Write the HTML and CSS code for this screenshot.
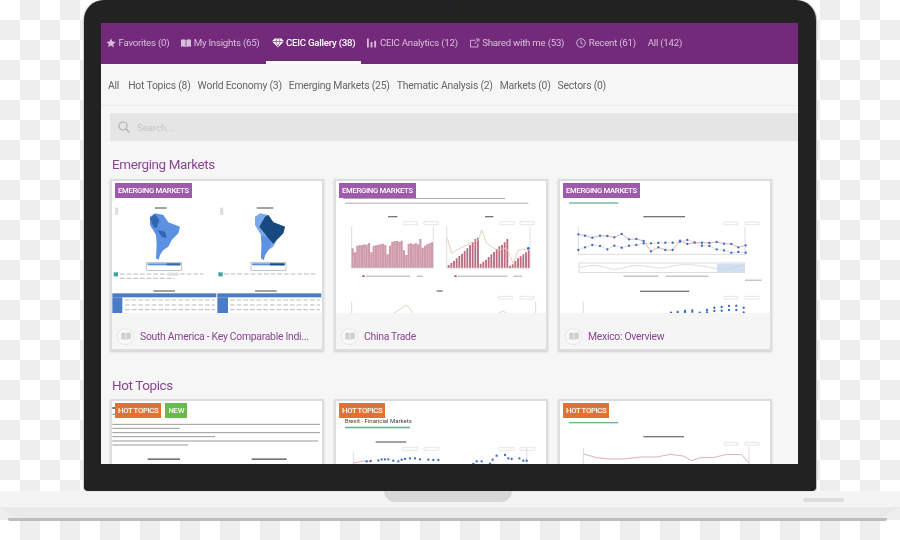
FILE: index.html
```html
<!DOCTYPE html>
<html lang="en">
<head>
<meta charset="utf-8">
<title>CEIC Gallery</title>
<link rel="stylesheet" href="styles.css">
</head>
<body>
<svg class="defs" width="0" height="0" aria-hidden="true">
  <symbol id="book" viewBox="0 0 12 10"><path d="M0 1.2C2 .2 4.4.4 5.6 1.4V10C4.4 9 2 8.8 0 9.6ZM12 1.2C10 .2 7.6.4 6.4 1.4V10C7.6 9 10 8.8 12 9.6Z"/></symbol>
</svg>
<main class="laptop">
  <section class="lid">
    <span class="camera"></span>
    <div class="screen">
      <nav class="tabs">
        <a class="tab"><svg class="ico" viewBox="0 0 12 12"><path d="M6 .6l1.7 3.6 3.9.5-2.9 2.7.8 3.9L6 8.9l-3.5 1.9.8-3.9L.4 4.7l3.9-.5z"/></svg>Favorites (0)</a>
        <a class="tab"><svg class="ico" viewBox="0 0 12 10"><use href="#book"/></svg>My Insights (65)</a>
        <a class="tab active"><svg class="ico gem" viewBox="0 0 13 10"><path d="M3 0h7l3 3.2-6.5 6.8L0 3.2z"/><path class="cut" d="M0 3.4h13M4.200 3.400L6.500 9l2.300-5.600M4.200 3.400L5.500.2M8.800 3.400L7.500.2"/></svg>CEIC Gallery (38)</a>
        <a class="tab"><svg class="ico" viewBox="0 0 11 10"><path d="M0 0h2v10H0zM4 4h2v6H4zM8 2.500h2V10H8z"/></svg>CEIC Analytics (12)</a>
        <a class="tab"><svg class="ico line" viewBox="0 0 11 10"><path d="M6 2H.6v7.400h8V5.500M5 6l4.500-5M6.500.6h3.300v3"/></svg>Shared with me (53)</a>
        <a class="tab"><svg class="ico line" viewBox="0 0 11 11"><circle cx="5.500" cy="5.500" r="4.700"/><path d="M5.500 2.500v3.300l2.200 1.200"/></svg>Recent (61)</a>
        <a class="tab">All (142)</a>
      </nav>
      <nav class="filters">
        <a>All</a><a class="spaced">Hot Topics (8)</a><a>World Economy (3)</a><a>Emerging Markets (25)</a><a>Thematic Analysis (2)</a><a>Markets (0)</a><a>Sectors (0)</a>
      </nav>
      <div class="search">
        <svg class="search-ico" viewBox="0 0 12 12"><circle cx="5" cy="5" r="4"/><path d="M8 8l3.500 3.500"/></svg>
        <span>Search...</span>
      </div>

      <h2 class="heading">Emerging Markets</h2>
      <div class="cards">
        <article class="card">
          <span class="badges"><b class="badge purple">EMERGING MARKETS</b></span>
          <svg class="thumb" viewBox="36 18 630 396">
            <rect class="soft" x="45" y="98" width="10" height="22"/><rect class="soft" x="360" y="98" width="10" height="22"/>
            <rect class="ink" x="165" y="97" width="35" height="4"/><rect class="ink" x="470" y="97" width="50" height="4"/>
            <path class="blue" d="M150 125L165 115L190 120L205 142L240 155L235 175L215 195L205 215L190 225L180 240L176 255L168 250L170 210L168 180L150 150Z"/>
            <path class="navy" d="M150 130L165 118L178 135L170 160L160 155ZM172 165L195 170L200 190L185 185Z"/>
            <path class="pale" d="M465 125L480 115L505 120L520 142L555 155L550 175L530 195L520 215L505 225L495 240L491 255L483 250L485 210L483 180L465 150Z"/>
            <path class="navy2" d="M495 125L505 120L520 142L555 155L550 175L530 195L520 207L505 190L490 170L478 155Z"/>
            <path class="blue" d="M483 180L505 190L515 208L505 225L495 240L491 255L483 250L485 210Z"/>
            <rect class="frame" x="140" y="262" width="105" height="24"/><rect class="frame" x="453" y="262" width="105" height="24"/>
            <rect class="blue" x="143" y="265" width="98" height="6"/><rect class="navy" x="200" y="265" width="41" height="6"/>
            <rect class="blue" x="456" y="265" width="98" height="6"/><rect class="navy2" x="510" y="265" width="44" height="6"/>
            <rect class="teal" x="41" y="292" width="13" height="12"/><rect class="teal" x="355" y="292" width="13" height="12"/>
            <path class="dash" d="M60 297H310M60 310H225M372 297H650"/>
            <rect class="soft" x="204" y="293" width="32" height="9"/>
            <rect class="ink" x="160" y="346" width="65" height="4"/><rect class="ink" x="465" y="346" width="65" height="4"/>
            <rect class="tbl" x="37" y="355" width="312" height="12"/><rect class="tbl" x="352" y="355" width="312" height="12"/>
            <rect class="tbl" x="37" y="367" width="30" height="48"/><rect class="tbl" x="352" y="367" width="32" height="48"/>
            <path class="dash" d="M75 375H345M75 390H345M75 404H345M390 375H660M390 390H660M390 404H660"/>
          </svg>
          <footer class="foot"><span class="disc"><svg class="book"><use href="#book"/></svg></span><span class="name">South America - Key Comparable Indi...</span></footer>
        </article>

        <article class="card">
          <span class="badges"><b class="badge purple">EMERGING MARKETS</b></span>
          <svg class="thumb" viewBox="18 18 630 396">
            <rect class="ink2" x="40" y="69" width="485" height="3"/><rect class="ink2" x="45" y="83" width="550" height="3"/>
            <rect class="ink" x="174" y="123" width="28" height="4"/><rect class="ink" x="465" y="123" width="25" height="4"/>
            <path class="box" d="M220 140h42v9h-42zM282 140h42v9h-42zM510 140h42v9h-42zM570 140h42v9h-42zM505 364h42v8h-42zM570 364h42v8h-42z"/>
            <path class="axis" d="M65 155V280M310 155V280M350 155V280M600 155V280M65 279H310M350 279H600M65 380V415M617 380V415"/>
            <path class="bar" d="M68 278V220M75 278V232M82 278V212M89 278V210M96 278V210M103 278V208M110 278V209M117 278V204M124 278V232M131 278V212M138 278V211M145 278V209M152 278V208M159 278V206M166 278V210M173 278V238M180 278V212M187 278V200M194 278V198M201 278V198M208 278V200M215 278V197M222 278V226M229 278V240M236 278V206M243 278V205M250 278V208M257 278V204M264 278V208M271 278V192M278 278V218M285 278V212M292 278V208M299 278V205M306 278V202"/>
            <path class="bar dark" d="M356 278V270M364 278V264M372 278V258M380 278V250M388 278V243M396 278V236M404 278V228M412 278V220M420 278V210M428 278V202M436 278V192M444 278V188M452 278V266M460 278V260M468 278V254M476 278V246M484 278V238M492 278V231M500 278V222M508 278V214M516 278V210M524 278V202M532 278V192M540 278V272M548 278V268M556 278V258M564 278V250M572 278V244M580 278V238M588 278V232M596 278V226"/>
            <path class="beige" d="M352 190L365 235L380 225L420 205L445 195L455 165L470 205L500 225L530 220L550 265L565 225L595 222M190 415L230 390L250 415M505 415L520 408L530 415"/>
            <circle class="dot" cx="595" cy="220" r="4"/>
            <rect class="bar-k" x="97" y="301" width="7" height="5"/><rect class="ink2" x="108" y="302" width="132" height="3"/><rect class="ink2" x="260" y="302" width="18" height="3"/>
            <rect class="bar-k" x="373" y="301" width="7" height="5"/><rect class="ink2" x="384" y="302" width="148" height="3"/><rect class="ink2" x="550" y="302" width="26" height="3"/>
            <rect class="ink" x="320" y="346" width="18" height="4"/>
          </svg>
          <footer class="foot"><span class="disc"><svg class="book"><use href="#book"/></svg></span><span class="name">China Trade</span></footer>
        </article>

        <article class="card">
          <span class="badges"><b class="badge purple">EMERGING MARKETS</b></span>
          <svg class="thumb" viewBox="15 18 630 396">
            <rect class="green" x="42" y="82" width="148" height="4"/>
            <rect class="ink" x="265" y="123" width="125" height="4"/>
            <path class="box" d="M507 141h40v8h-40zM570 141h42v8h-42zM507 364h40v8h-40zM570 364h42v8h-42z"/>
            <path class="axis" d="M70 155V240M570 155V240M70 238H570M85 380V415"/>
            <polyline class="pink" points="70,178 90,182 112,188 135,182 157,183 178,187 200,177 222,193 244,192 266,198 288,229 310,217 331,225 353,225 375,197 397,207 419,203 441,203 463,204 485,201 507,206 529,207 550,217 572,211"/>
            <polyline class="pink light" points="70,225 90,217 112,210 135,213 157,223 178,212 200,218 222,212 244,210 266,205 288,205 310,204 331,203 353,203 375,200 397,195 419,202 441,212 463,213 485,223 507,226 529,233 550,231 572,233"/>
            <path class="dots" d="M70 178h.01M90 182h.01M112 188h.01M135 182h.01M157 183h.01M178 187h.01M200 177h.01M222 193h.01M244 192h.01M266 198h.01M288 229h.01M310 217h.01M331 225h.01M353 225h.01M375 197h.01M397 207h.01M419 203h.01M441 203h.01M463 204h.01M485 201h.01M507 206h.01M529 207h.01M550 217h.01M572 211h.01M70 225h.01M90 217h.01M112 210h.01M135 213h.01M157 223h.01M178 212h.01M200 218h.01M222 212h.01M244 210h.01M266 205h.01M288 205h.01M310 204h.01M331 203h.01M353 203h.01M375 200h.01M397 195h.01M419 202h.01M441 212h.01M463 213h.01M485 223h.01M507 226h.01M529 233h.01M550 231h.01M572 233h.01"/>
            <rect class="frame thin" x="72" y="264" width="497" height="28"/><rect class="sel" x="486" y="266" width="82" height="25"/>
            <path class="axis" d="M75 278C110 268 130 270 160 280S220 268 260 272S310 284 350 274S430 270 480 280S540 274 566 270"/>
            <rect class="ink2" x="205" y="302" width="105" height="3"/><rect class="ink2" x="332" y="302" width="128" height="3"/><rect class="ink2" x="570" y="314" width="50" height="3"/>
            <rect class="ink" x="255" y="347" width="148" height="4"/>
            <path class="dots" d="M348 413h.01M368 411h.01M390 408h.01M412 406h.01M434 413h.01M456 405h.01M478 398h.01M500 396h.01M522 393h.01M544 392h.01M566 398h.01M368 413h.01M390 411h.01M412 410h.01M456 412h.01M478 408h.01M500 407h.01M522 405h.01M544 405h.01M566 412h.01"/>
          </svg>
          <footer class="foot"><span class="disc"><svg class="book"><use href="#book"/></svg></span><span class="name">Mexico: Overview</span></footer>
        </article>
      </div>

      <h2 class="heading lower">Hot Topics</h2>
      <div class="cards">
        <article class="card">
          <span class="badges"><b class="badge orange">HOT TOPICS</b><b class="badge lime">NEW</b></span>
          <svg class="thumb" viewBox="36 96 630 396">
            <rect class="ink" x="37" y="114" width="8" height="6"/><rect class="green" x="37" y="134" width="8" height="4"/>
            <path class="para" d="M37 166H660M37 178H240M37 191H660M37 203H345M37 216H655M37 228H265"/>
            <rect class="ink" x="143" y="268" width="97" height="5"/><rect class="ink" x="455" y="268" width="105" height="5"/>
          </svg>
          <footer class="foot"><span class="disc"><svg class="book"><use href="#book"/></svg></span></footer>
        </article>

        <article class="card">
          <span class="badges"><b class="badge orange">HOT TOPICS</b></span>
          <svg class="thumb" viewBox="708 96 630 396">
            <text class="brexit" x="734" y="162">Brexit - Financial Markets</text>
            <rect class="green" x="735" y="173" width="195" height="5"/>
            <rect class="ink" x="827" y="217" width="92" height="4"/>
            <path class="box" d="M908 236h45v8h-45zM972 236h45v8h-45zM1197 236h45v8h-45zM1260 236h45v8h-45z"/>
            <path class="axis" d="M760 250V290M1280 236V290"/>
            <path class="pink" d="M760 282L790 276L815 278"/>
            <path class="dots" d="M800 277h.01M812 276h.01M835 274h.01M845 271h.01M855 271h.01M865 271h.01M880 275h.01M895 277h.01M905 272h.01M915 270h.01M930 268h.01M945 268h.01M960 271h.01M985 272h.01M1000 273h.01M1015 273h.01M1120 285h.01M1130 277h.01M1145 277h.01M1170 284h.01M1178 272h.01M1190 260h.01M1215 258h.01M1225 268h.01M1235 270h.01M1258 268h.01M1270 275h.01M1280 275h.01"/>
          </svg>
          <footer class="foot"><span class="disc"><svg class="book"><use href="#book"/></svg></span></footer>
        </article>

        <article class="card">
          <span class="badges"><b class="badge orange">HOT TOPICS</b></span>
          <svg class="thumb" viewBox="330 96 630 396">
            <rect class="green" x="357" y="159" width="148" height="4"/>
            <rect class="ink" x="580" y="201" width="122" height="4"/>
            <path class="box" d="M822 220h42v8h-42zM885 220h42v8h-42z"/>
            <path class="axis" d="M400 237V285M897 232V285"/>
            <polyline class="pink" points="400,255 440,266 480,270 520,270 575,264 620,264 660,256 700,261 725,275 750,266 790,266 830,256 875,257 897,282"/>
          </svg>
          <footer class="foot"><span class="disc"><svg class="book"><use href="#book"/></svg></span></footer>
        </article>
      </div>
    </div>
  </section>
  <section class="base">
    <div class="deck"><span class="notch"></span><span class="pill"></span></div>
    <div class="edge"></div>
    <div class="rim"></div>
  </section>
</main>
</body>
</html>
```
FILE: styles.css
```css
* { box-sizing: border-box; }
html, body { margin: 0; height: 100%; }
body {
  width: 900px;
  height: 540px;
  overflow: hidden;
  background: conic-gradient(#eee 25%, #fff 0 50%, #eee 0 75%, #fff 0) 0 0 / 40px 40px;
  font-family: Roboto, "Liberation Sans", sans-serif;
}
.defs { display: block; height: 0; }

.lid {
  position: relative;
  width: 732px;
  height: 491px;
  margin-left: 84px;
  padding: 23px 18px 27px 17px;
  background: #222;
  border-radius: 20px 20px 4px 4px;
  box-shadow: 1px 0 1px #bbb, -1px 0 1px #ccc;
}
.camera {
  position: absolute;
  top: 11px;
  left: 365px;
  width: 3px;
  height: 3px;
  border-radius: 50%;
  background: #1c2238;
}
.screen {
  height: 441px;
  overflow: hidden;
  background: #f6f6f6;
  filter: blur(.45px);
}

.tabs {
  display: flex;
  height: 41px;
  background: #732a7a;
}
.tab {
  display: flex;
  align-items: center;
  gap: 2.5px;
  padding: 1px 6px 0;
  font-size: 9.7px;
  letter-spacing: -.25px;
  color: #d9bedc;
  white-space: nowrap;
  border-bottom: 3px solid transparent;
}
.tab:first-child { padding-left: 5px; }
.tab.active {
  color: #fff;
  font-weight: 500;
  border-bottom-color: #fff;
}
.ico { width: 10px; height: 10px; fill: #d9bedc; flex: none; }
.ico.gem { width: 12px; fill: #fff; }
.ico .cut { fill: none; stroke: #732a7a; stroke-width: .7; }
.ico.line { fill: none; stroke: #d9bedc; stroke-width: 1; }

.filters {
  display: flex;
  gap: 7px;
  align-items: center;
  height: 42px;
  padding: 1px 0 0 7px;
  font-size: 10.4px;
  letter-spacing: -.22px;
  color: #666;
  border-bottom: 1px solid #f3e6f3;
  white-space: nowrap;
}
.filters .spaced { margin-left: 2px; }

.search {
  display: flex;
  align-items: center;
  gap: 7px;
  height: 28px;
  margin: 7px 0 0 9px;
  padding-left: 8px;
  background: #e5e5e5;
  font-size: 9.5px;
  color: #c4c4c8;
}
.search-ico { width: 12px; height: 12px; fill: none; stroke: #aeb0b4; stroke-width: 1.2; }

.heading {
  margin: 15px 0 6px 11px;
  height: 17px;
  line-height: 17px;
  font-size: 13.4px;
  letter-spacing: -.35px;
  font-weight: 400;
  color: #8a4592;
}
.heading.lower { margin-top: 26px; margin-bottom: 5px; }

.cards {
  display: flex;
  gap: 10px;
  margin-left: 9px;
}
.card {
  position: relative;
  flex: none;
  width: 214px;
  height: 172px;
  border: 2px solid #ddd;
  background: #fff;
  box-shadow: 0 1px 2px #ccc;
}
.badges {
  position: absolute;
  top: 2px;
  left: 3px;
  display: flex;
  gap: 4px;
}
.badge {
  padding: 0 3px;
  height: 15px;
  line-height: 15px;
  font-size: 7.7px;
  letter-spacing: -.3px;
  font-weight: 500;
  color: #fff;
  white-space: nowrap;
}
.purple { background: #9d5bab; }
.orange { background: #e4722f; }
.lime { background: #66bb4a; }

.thumb { display: block; width: 210px; height: 132px; filter: blur(.55px); }
.foot {
  display: flex;
  align-items: center;
  gap: 6px;
  height: 36px;
  padding: 10px 0 0 5px;
  background: #f5f5f5;
}
.disc {
  display: flex;
  align-items: center;
  justify-content: center;
  width: 17px;
  height: 17px;
  border: 1px solid #e4e4e4;
  border-radius: 50%;
  background: #fafafa;
}
.book { width: 10px; height: 8px; fill: #cfcfcf; }
.name {
  font-size: 10.4px;
  letter-spacing: -.28px;
  color: #8a4592;
  white-space: nowrap;
}

/* thumbnail artwork */
.ink { fill: #777; }
.ink2 { fill: #aaa; }
.soft { fill: #dedede; }
.blue { fill: #5b90e2; }
.pale { fill: #7aa8ea; }
.navy { fill: #2f66ad; }
.navy2 { fill: #164a80; }
.teal { fill: #3aa6a0; }
.tbl { fill: #4a7cc7; }
.green { fill: #6cb594; }
.frame { fill: #fff; stroke: #aaa; stroke-width: 2; }
.frame.thin { stroke: #ccc; }
.dash { fill: none; stroke: #bbb; stroke-width: 3; stroke-dasharray: 14 6; }
.para { fill: none; stroke: #999; stroke-width: 3; }
.box { fill: none; stroke: #ccc; stroke-width: 1.5; }
.axis { fill: none; stroke: #ccc; stroke-width: 2; }
.bar { fill: none; stroke: #cf9aa9; stroke-width: 6.5; }
.bar.dark { stroke: #bd6a81; stroke-width: 5.5; }
.bar-k { fill: #b14a68; }
.beige { fill: none; stroke: #d8cdb0; stroke-width: 2.5; }
.dot { fill: #2f62c4; }
.pink { fill: none; stroke: #d9a0ac; stroke-width: 2.500; }
.pink.light { stroke: #e3d0d4; }
.dots { fill: none; stroke: #3a6cc8; stroke-width: 7; stroke-linecap: round; }
.sel { fill: #cfe0f5; }
.brexit { font-size: 18px; fill: #444; }

/* laptop base */
.base { width: 900px; }
.deck {
  display: flex;
  align-items: flex-start;
  height: 16px;
  padding-left: 384px;
  background: #f4f4f4;
}
.notch {
  width: 128px;
  height: 11px;
  border-radius: 0 0 14px 14px;
  background: #d8d8d8;
}
.pill {
  width: 41px;
  height: 4px;
  margin: 7px 0 0 291px;
  border-radius: 2px;
  background: #ddd;
}
.edge {
  height: 11px;
  background: #e9e9e9;
  clip-path: polygon(0 0, 100% 0, 98% 100%, 2% 100%);
}
.rim {
  width: 879px;
  height: 3px;
  margin-left: 8px;
  border-radius: 0 0 2px 2px;
  background: #bdbdbd;
}
```
